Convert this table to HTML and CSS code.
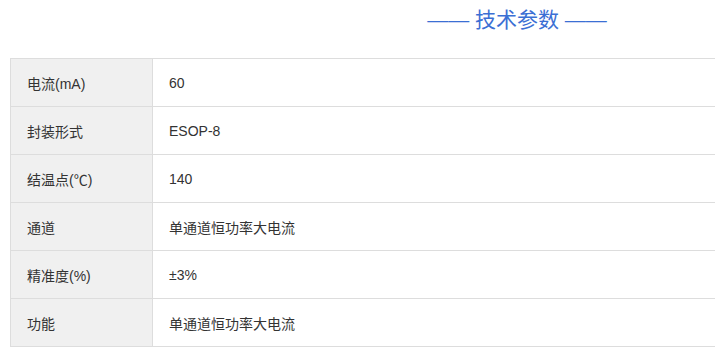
FILE: index.html
```html
<!DOCTYPE html>
<html>
<head>
<meta charset="utf-8">
<link rel="stylesheet" href="styles.css">
</head>
<body>
<div class="page">
<div class="wrap">
  <h2 class="title">—— 技术参数 ——</h2>
  <table class="params">
    <tr><td class="k">电流(mA)</td><td class="v">60</td></tr>
    <tr><td class="k">封装形式</td><td class="v">ESOP-8</td></tr>
    <tr><td class="k">结温点(℃)</td><td class="v">140</td></tr>
    <tr><td class="k">通道</td><td class="v">单通道恒功率大电流</td></tr>
    <tr><td class="k">精准度(%)</td><td class="v">±3%</td></tr>
    <tr><td class="k">功能</td><td class="v">单通道恒功率大电流</td></tr>
  </table>
</div>
</div>
</body>
</html>
```
FILE: styles.css
```css
html, body { margin: 0; padding: 0; background: #fff; overflow: hidden; }
body { font-family: "Liberation Sans", Arial, "Noto Sans CJK SC", sans-serif; color: #333; }
.page { width: 100%; overflow: hidden; }
.wrap { width: 1014px; padding: 0 10px; }
.title {
  margin: 0;
  height: 58px;
  box-sizing: border-box;
  padding-top: 6px;
  text-align: center;
  font-weight: normal;
  font-size: 21px;
  line-height: 28px;
  color: #3b6fd4;
  font-family: "Liberation Sans", "Noto Sans CJK SC", sans-serif;
}
.params { width: 100%; border-collapse: collapse; font-size: 14px; }
.params td { border: 1px solid #dddddd; height: 48px; box-sizing: border-box; padding: 0 16px; vertical-align: middle; }
.params td.k { width: 142px; background: #f0f0f0; }
```
